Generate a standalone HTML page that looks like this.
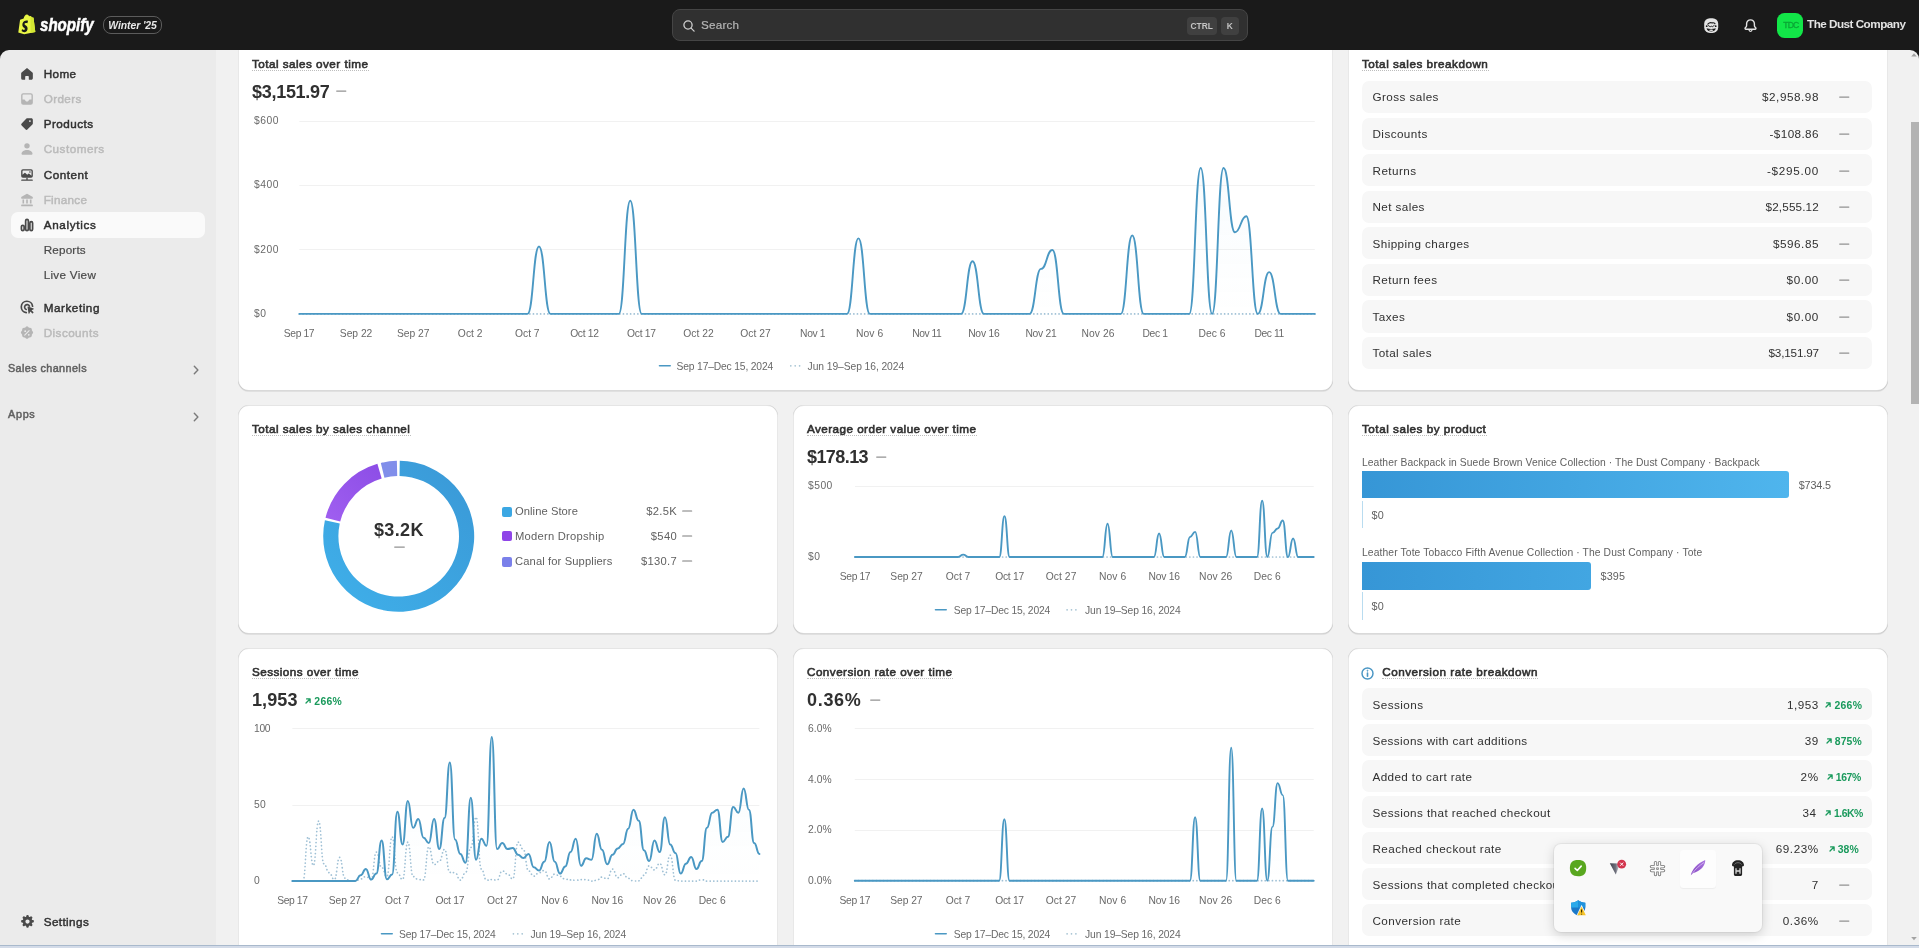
<!DOCTYPE html><html lang="en"><head><meta charset="utf-8"><title>Analytics</title><style>
*{box-sizing:border-box;margin:0;padding:0}
html,body{width:1919px;height:948px;overflow:hidden;background:#1a1a1a;font-family:"Liberation Sans",sans-serif;}
.t{position:absolute;white-space:nowrap;}
.a{position:absolute;}
.card{position:absolute;background:#fff;border-radius:11px;box-shadow:inset 1px 0 0 rgba(0,0,0,.09),inset -1px 0 0 rgba(0,0,0,.09),inset 0 -1px 0 rgba(0,0,0,.15),inset 0 1px 0 rgba(204,204,204,.5),0 1px 0 rgba(26,26,26,.08);}
.row{position:absolute;background:#f7f7f7;border-radius:7px;left:1362px;width:510px;height:32.4px;}
svg{position:absolute;overflow:visible}
.ul{position:absolute;height:0;border-bottom:1px dotted #bdbdbd;}
</style></head><body><div id="root" style="position:absolute;left:0;top:0;width:1919px;height:948px;will-change:transform">
<div class="a" style="left:0;top:50px;width:216px;height:898px;background:#ebebeb;border-top-left-radius:9px"></div>
<div class="a" style="left:216px;top:50px;width:1703px;height:898px;background:#f1f1f1;border-top-right-radius:9px"></div>
<div class="card" style="left:238.0px;top:30.0px;width:1095.0px;height:361.0px;"></div>
<div class="card" style="left:1348.0px;top:30.0px;width:540.0px;height:361.0px;"></div>
<div class="card" style="left:238.0px;top:405.0px;width:540.0px;height:229.0px;"></div>
<div class="card" style="left:793.0px;top:405.0px;width:540.0px;height:229.0px;"></div>
<div class="card" style="left:1348.0px;top:405.0px;width:540.0px;height:229.0px;"></div>
<div class="card" style="left:238.0px;top:648.0px;width:540.0px;height:320.0px;"></div>
<div class="card" style="left:793.0px;top:648.0px;width:540.0px;height:320.0px;"></div>
<div class="card" style="left:1348.0px;top:648.0px;width:540.0px;height:320.0px;"></div>
<div class="a" style="left:216px;top:0;width:1703px;height:50px;background:#1a1a1a"></div>
<div class="a" style="left:11px;top:212.3px;width:193.5px;height:25.4px;background:#fafafa;border-radius:7px"></div>
<svg class="a" style="left:18.00px;top:64.90px;color:#4a4a4a" width="18" height="18" viewBox="0 0 20 20" fill="currentColor"><path d="M9.3 3.75a1.1 1.1 0 0 1 1.4 0l5.35 4.5c.28.24.45.6.45.96v5.54c0 .97-.78 1.75-1.75 1.75h-2a.75.75 0 0 1-.75-.75v-2.75a.75.75 0 0 0-.75-.75h-2.5a.75.75 0 0 0-.75.75v2.75c0 .41-.34.75-.75.75h-2a1.75 1.75 0 0 1-1.75-1.75v-5.54c0-.37.17-.72.45-.96z"/></svg>
<span class="t" style="left:43.70px;top:67px;font-size:11.70px;line-height:13px;height:13px;color:#303030;-webkit-text-stroke:0.45px #303030;letter-spacing:0.398px;">Home</span>
<svg class="a" style="left:18.00px;top:89.60px;color:#b5b5b5" width="18" height="18" viewBox="0 0 20 20" fill="currentColor"><path fill-rule="evenodd" d="M5.75 3.5h8.5a2.25 2.25 0 0 1 2.25 2.25v8.5a2.25 2.25 0 0 1-2.25 2.25h-8.5a2.25 2.25 0 0 1-2.25-2.25v-8.5a2.25 2.25 0 0 1 2.25-2.25zm0 1.5a.75.75 0 0 0-.75.75v4.75h1.9c.5 0 .93.33 1.07.8.27.86 1.07 1.45 2.03 1.45s1.76-.6 2.03-1.45c.14-.47.57-.8 1.07-.8H15v-4.75a.75.75 0 0 0-.75-.75z"/></svg>
<span class="t" style="left:43.70px;top:92px;font-size:11.70px;line-height:13px;height:13px;color:#bababa;-webkit-text-stroke:0.45px #bababa;letter-spacing:0.374px;">Orders</span>
<svg class="a" style="left:18.00px;top:114.80px;color:#4a4a4a" width="18" height="18" viewBox="0 0 20 20" fill="currentColor"><path fill-rule="evenodd" d="M10.6 3.5h4.15c.97 0 1.75.78 1.75 1.75v4.15c0 .46-.18.9-.51 1.24l-5.3 5.3a1.75 1.75 0 0 1-2.48 0l-4.15-4.15a1.75 1.75 0 0 1 0-2.48l5.3-5.3c.33-.33.78-.51 1.24-.51zm2.65 4.25a1 1 0 1 0 0-2 1 1 0 0 0 0 2z"/></svg>
<span class="t" style="left:43.70px;top:117px;font-size:11.70px;line-height:13px;height:13px;color:#303030;-webkit-text-stroke:0.45px #303030;letter-spacing:0.479px;">Products</span>
<svg class="a" style="left:18.00px;top:139.80px;color:#b5b5b5" width="18" height="18" viewBox="0 0 20 20" fill="currentColor"><path d="M10 9.5a3 3 0 1 0 0-6 3 3 0 0 0 0 6z"/><path d="M3.9 15.2c0-2.4 2.7-4.2 6.1-4.2s6.1 1.8 6.1 4.2c0 .75-.6 1.3-1.35 1.3h-9.5c-.75 0-1.35-.55-1.35-1.3z"/></svg>
<span class="t" style="left:43.70px;top:142px;font-size:11.70px;line-height:13px;height:13px;color:#bababa;-webkit-text-stroke:0.45px #bababa;letter-spacing:0.493px;">Customers</span>
<svg class="a" style="left:18.00px;top:165.50px;color:#4a4a4a" width="18" height="18" viewBox="0 0 20 20" fill="currentColor"><path fill-rule="evenodd" d="M5.5 3.5h9a2 2 0 0 1 2 2v5.5a2 2 0 0 1-2 2h-9a2 2 0 0 1-2-2v-5.5a2 2 0 0 1 2-2zm-.5 6.3 2.2-2.1a.7.7 0 0 1 .95 0l2.1 2 1.3-1.2a.7.7 0 0 1 .95 0l2.5 2.4v-5.4a.5.5 0 0 0-.5-.5h-9a.5.5 0 0 0-.5.5zm8.25-2.3a.9.9 0 1 0 0-1.8.9.9 0 0 0 0 1.8z"/><path d="M3.5 15.75a.75.75 0 0 1 .75-.75h11.5a.75.75 0 0 1 0 1.5h-11.5a.75.75 0 0 1-.75-.75z"/><path d="M9.25 13h1.5v2.5h-1.5z"/></svg>
<span class="t" style="left:43.70px;top:168px;font-size:11.70px;line-height:13px;height:13px;color:#303030;-webkit-text-stroke:0.45px #303030;letter-spacing:0.503px;">Content</span>
<svg class="a" style="left:18.00px;top:190.60px;color:#b5b5b5" width="18" height="18" viewBox="0 0 20 20" fill="currentColor"><path d="M9.4 3.2a1.2 1.2 0 0 1 1.2 0l5.4 3.1c.3.17.5.5.5.85v.6a.75.75 0 0 1-.75.75h-11.5a.75.75 0 0 1-.75-.75v-.6c0-.35.2-.68.5-.85z"/><path d="M5 9.5h1.75v4.5h-1.75zM9.1 9.5h1.8v4.5h-1.8zM13.25 9.5h1.75v4.5h-1.75z"/><path d="M3.5 15.75c0-.41.34-.75.75-.75h11.5a.75.75 0 0 1 .75.75v.5a.75.75 0 0 1-.75.75h-11.5a.75.75 0 0 1-.75-.75z"/></svg>
<span class="t" style="left:43.70px;top:193px;font-size:11.70px;line-height:13px;height:13px;color:#bababa;-webkit-text-stroke:0.45px #bababa;letter-spacing:0.268px;">Finance</span>
<svg class="a" style="left:18.00px;top:215.50px;color:#4a4a4a" width="18" height="18" viewBox="0 0 20 20" fill="currentColor"><g fill="none" stroke="currentColor" stroke-width="1.9"><rect x="3.8" y="10.3" width="3" height="6" rx="1.5"/><rect x="8.5" y="3.8" width="3" height="12.5" rx="1.5"/><rect x="13.2" y="6.3" width="3" height="10" rx="1.5"/></g></svg>
<span class="t" style="left:43.70px;top:218px;font-size:11.70px;line-height:13px;height:13px;color:#303030;-webkit-text-stroke:0.45px #303030;letter-spacing:0.665px;">Analytics</span>
<svg class="a" style="left:18.00px;top:298.40px;color:#4a4a4a" width="18" height="18" viewBox="0 0 20 20" fill="currentColor"><g fill="none" stroke="currentColor" stroke-width="1.85" stroke-linecap="round"><path d="M16.2 9.2a6.3 6.3 0 1 0-7 7"/><path d="M12.7 9a2.8 2.8 0 1 0-3.6 3.7"/></g><path d="M10.6 10.1a.5.5 0 0 1 .63-.63l6.1 2.1a.5.5 0 0 1 .05.92l-2.3 1.1 2 2a.6.6 0 0 1 0 .85l-.5.5a.6.6 0 0 1-.85 0l-2-2-1.1 2.3a.5.5 0 0 1-.92-.05z"/></svg>
<span class="t" style="left:43.70px;top:301px;font-size:11.70px;line-height:13px;height:13px;color:#303030;-webkit-text-stroke:0.45px #303030;letter-spacing:0.548px;">Marketing</span>
<svg class="a" style="left:18.00px;top:324.00px;color:#b5b5b5" width="18" height="18" viewBox="0 0 20 20" fill="currentColor"><path fill-rule="evenodd" d="M8.6 3.3a2 2 0 0 1 2.8 0l.5.5c.2.2.5.3.8.3h.7a2 2 0 0 1 2 2v.7c0 .3.1.6.3.8l.5.5a2 2 0 0 1 0 2.8l-.5.5c-.2.2-.3.5-.3.8v.7a2 2 0 0 1-2 2h-.7c-.3 0-.6.1-.8.3l-.5.5a2 2 0 0 1-2.8 0l-.5-.5a1.1 1.1 0 0 0-.8-.3h-.7a2 2 0 0 1-2-2v-.7c0-.3-.1-.6-.3-.8l-.5-.5a2 2 0 0 1 0-2.8l.5-.5c.2-.2.3-.5.3-.8v-.7a2 2 0 0 1 2-2h.7c.3 0 .6-.1.8-.3zm-.6 5.7a1 1 0 1 0 0-2 1 1 0 0 0 0 2zm4 4a1 1 0 1 0 0-2 1 1 0 0 0 0 2zm.8-5.1a.6.6 0 0 0-.85-.85l-4.9 4.9a.6.6 0 0 0 .85.85z"/></svg>
<span class="t" style="left:43.70px;top:326px;font-size:11.70px;line-height:13px;height:13px;color:#bababa;-webkit-text-stroke:0.45px #bababa;letter-spacing:0.437px;">Discounts</span>
<span class="t" style="left:43.70px;top:243px;font-size:11.70px;line-height:13px;height:13px;color:#4a4a4a;-webkit-text-stroke:0.20px #4a4a4a;letter-spacing:0.176px;">Reports</span>
<span class="t" style="left:43.70px;top:268px;font-size:11.70px;line-height:13px;height:13px;color:#4a4a4a;-webkit-text-stroke:0.20px #4a4a4a;letter-spacing:0.293px;">Live View</span>
<span class="t" style="left:8.00px;top:362px;font-size:10.80px;line-height:12px;height:12px;color:#616161;-webkit-text-stroke:0.50px #616161;letter-spacing:0.411px;">Sales channels</span>
<span class="t" style="left:8.00px;top:408px;font-size:10.80px;line-height:12px;height:12px;color:#616161;-webkit-text-stroke:0.50px #616161;letter-spacing:0.721px;">Apps</span>
<svg class="a" style="left:190.6px;top:365.0px" width="10" height="10" viewBox="0 0 10 10" fill="none" stroke="#7a7a7a" stroke-width="1.4" stroke-linecap="round" stroke-linejoin="round"><path d="M3.300 1.200l3.600 3.800-3.600 3.800"/></svg>
<svg class="a" style="left:190.6px;top:411.5px" width="10" height="10" viewBox="0 0 10 10" fill="none" stroke="#7a7a7a" stroke-width="1.4" stroke-linecap="round" stroke-linejoin="round"><path d="M3.300 1.200l3.600 3.800-3.600 3.800"/></svg>
<svg class="a" style="left:18.50px;top:913.10px;color:#4a4a4a" width="17" height="17" viewBox="0 0 20 20" fill="currentColor"><path fill-rule="evenodd" d="M8.6 3.2c.1-.55.58-.95 1.14-.95h.52c.56 0 1.04.4 1.14.95l.2 1.1c.38.13.75.3 1.08.5l.93-.63a1.16 1.16 0 0 1 1.48.14l.37.37c.4.4.45 1.02.14 1.48l-.64.93c.2.34.37.7.5 1.08l1.1.2c.55.1.95.58.95 1.14v.52c0 .56-.4 1.040-.95 1.14l-1.1.2c-.13.38-.3.75-.5 1.08l.64.93c.31.46.26 1.080-.14 1.48l-.37.37c-.4.4-1.020.45-1.480.14l-.93-.64c-.34.2-.7.37-1.080.5l-.2 1.100c-.1.55-.58.950-1.140.950h-.52c-.56 0-1.040-.4-1.140-.95l-.2-1.100a5.500 5.500 0 0 1-1.080-.5l-.93.640c-.46.310-1.080.260-1.480-.140l-.37-.37a1.160 1.160 0 0 1-.140-1.480l.640-.93a5.500 5.500 0 0 1-.5-1.080l-1.100-.2a1.160 1.160 0 0 1-.950-1.140v-.52c0-.56.4-1.040.950-1.140l1.100-.2c.13-.38.3-.75.5-1.080l-.640-.93a1.160 1.160 0 0 1 .140-1.480l.37-.37c.4-.4 1.020-.45 1.480-.14l.93.630c.34-.2.7-.37 1.080-.5zm1.400 9.300a2.500 2.500 0 1 0 0-5 2.500 2.500 0 0 0 0 5z"/></svg>
<span class="t" style="left:43.70px;top:915px;font-size:11.70px;line-height:13px;height:13px;color:#303030;-webkit-text-stroke:0.45px #303030;letter-spacing:0.403px;">Settings</span>
<div class="a" style="left:0;top:0;width:1919px;height:50px;background:#1a1a1a"></div>
<svg class="a" style="left:18.3px;top:14.3px" width="17.8" height="20.3" viewBox="0 0 19 19.5" preserveAspectRatio="none">
<path d="M2.2 5.6 6 4.4C6.5 2.4 7.8.6 9.6.6c.7 0 1.2.3 1.6.8.3-.1.9 0 1.2.7l.9-.2c.2 0 .4.1.5.3l1.300 1.100 1.100.1c.2 0 .3.2.4.4l1.900 13.600-11.900 2.100-6.300-1.800z" fill="#e9f545"/>
<path d="M13.3 1.900l1.800 1.400 1.100.1c.2 0 .3.2.4.4l1.900 13.600-5.000.9z" fill="#d3e632"/>
<path d="M10.6 6.900l-.6 2c-.5-.25-1.100-.4-1.700-.35-1.350.1-1.360.95-1.350 1.150.07 1.150 3.100 1.400 3.270 4.100.13 2.100-1.130 3.600-2.950 3.700-2.200.14-3.400-1.150-3.400-1.150l.47-1.950s1.200.9 2.170.85c.63-.04.86-.55.830-.9-.1-1.500-2.550-1.400-2.700-3.850-.13-2.050 1.220-4.150 4.200-4.330.8-.06 1.400.08 1.760.23z" fill="#1a1a1a"/>
</svg>
<span class="t" style="left:40.10px;top:14px;font-size:18.60px;line-height:21px;height:21px;color:#ffffff;font-weight:700;font-style:italic;-webkit-text-stroke:0.55px #fff;transform-origin:0 50%;transform:scaleX(0.812);">shopify</span>
<div class="a" style="left:102.7px;top:16px;width:59.2px;height:18px;border:1px solid #5c5c5c;border-radius:8px"></div>
<span class="t" style="left:108.30px;top:20px;font-size:10.40px;line-height:11px;height:11px;color:#e8e8e8;font-weight:700;font-style:italic;letter-spacing:-0.069px;">Winter '25</span>
<div class="a" style="left:672px;top:9px;width:575.5px;height:31.7px;background:#303030;border:1px solid #454545;border-radius:8px"></div>
<svg class="a" style="left:681.5px;top:18.5px" width="14" height="14" viewBox="0 0 14 14" fill="none" stroke="#cfcfcf" stroke-width="1.3" stroke-linecap="round"><circle cx="6" cy="6" r="4.1"/><path d="M9.1 9.1l3 3"/></svg>
<span class="t" style="left:701.00px;top:18px;font-size:11.70px;line-height:13px;height:13px;color:#b5b5b5;-webkit-text-stroke:0.20px #b5b5b5;letter-spacing:0.205px;">Search</span>
<div class="a" style="left:1186.5px;top:17px;width:30.5px;height:17.5px;background:#404040;border-radius:4px"></div>
<div class="a" style="left:1221px;top:17px;width:17.5px;height:17.5px;background:#404040;border-radius:4px"></div>
<span class="t" style="left:1190.55px;top:21px;font-size:8.40px;line-height:10px;height:10px;color:#c4c4c4;font-weight:700;letter-spacing:0.026px;">CTRL</span>
<span class="t" style="left:1226.77px;top:21px;font-size:8.40px;line-height:10px;height:10px;color:#c4c4c4;font-weight:700;">K</span>
<svg class="a" style="left:1704px;top:17.6px" width="14.4" height="15.2" viewBox="0 0 14.4 15.2">
<rect x=".2" y=".2" width="14" height="14.8" rx="5.6" fill="#e4e4e4"/>
<path d="M3.800 6.100c1.300-1.400 3-1.800 4.500-1.200 1-.3 2 0 2.700.7" stroke="#1a1a1a" stroke-width="1.100" fill="none" stroke-linecap="round"/>
<circle cx="2.700" cy="8.200" r=".9" fill="#1a1a1a"/><circle cx="11.700" cy="8.200" r=".9" fill="#1a1a1a"/>
<path d="M4.200 7.500l2 1.300 1-.7 1 .7 2-1.300" stroke="#1a1a1a" stroke-width=".9" fill="none" stroke-linejoin="round" stroke-linecap="round"/>
<path d="M2.600 10.300c.5 4.300 8.700 4.300 9.200 0-2.800 1-6.400 1-9.200 0z" fill="#1a1a1a"/><ellipse cx="7.200" cy="12.300" rx="2.100" ry=".75" fill="#e4e4e4"/>
</svg>
<svg class="a" style="left:1742.5px;top:17.5px" width="15" height="15" viewBox="0 0 15 15" fill="none" stroke="#e3e3e3" stroke-width="1.4" stroke-linecap="round" stroke-linejoin="round">
<path d="M7.500 1.900c-2.300 0-3.900 1.700-3.900 3.900v1.600c0 .7-.3 1.400-.8 1.900l-.5.500c-.5.500-.2 1.400.6 1.400h9.200c.8 0 1.100-.9.600-1.400l-.5-.5c-.5-.5-.8-1.200-.8-1.900v-1.600c0-2.200-1.600-3.900-3.900-3.900z"/><path d="M6.200 12.400c.2.600.7 1 1.300 1s1.100-.4 1.300-1"/></svg>
<div class="a" style="left:1777.4px;top:12.5px;width:25.5px;height:25.6px;background:#12e648;border-radius:7.5px"></div>
<span class="t" style="left:1783.30px;top:20px;font-size:8.60px;line-height:10px;height:10px;color:#0aa535;-webkit-text-stroke:0.30px #0aa535;letter-spacing:-0.825px;">TDC</span>
<span class="t" style="left:1807.00px;top:17px;font-size:11.70px;line-height:13px;height:13px;color:#e3e3e3;font-weight:700;letter-spacing:-0.507px;">The Dust Company</span>
<span class="t" style="left:252.00px;top:57px;font-size:11.70px;line-height:13px;height:13px;color:#303030;-webkit-text-stroke:0.60px #303030;letter-spacing:0.469px;">Total sales over time</span>
<div class="ul" style="left:252.0px;top:70px;width:116.5px"></div>
<span class="t" style="left:252.00px;top:82px;font-size:18.00px;line-height:20px;height:20px;color:#303030;font-weight:700;letter-spacing:-0.286px;">$3,151.97</span>
<svg class="a" style="left:336.0px;top:89.3px" width="10.5" height="4" viewBox="0 0 10.5 4"><line x1="0.7" y1="2" x2="9.8" y2="2" stroke="#929292" stroke-width="1.25" stroke-linecap="round"/></svg>
<svg class="a" style="left:0;top:0" width="1919" height="948" viewBox="0 0 1919 948"><defs><linearGradient id="gA" x1="0" y1="0" x2="0" y2="1"><stop offset="0" stop-color="#4aa8da" stop-opacity="0.04"/><stop offset="1" stop-color="#4aa8da" stop-opacity="0"/></linearGradient></defs><line x1="299.4" x2="1314.8" y1="121.5" y2="121.5" stroke="#f1f1f1" stroke-width="1"/><line x1="299.4" x2="1314.8" y1="185.5" y2="185.5" stroke="#f1f1f1" stroke-width="1"/><line x1="299.4" x2="1314.8" y1="249.5" y2="249.5" stroke="#f1f1f1" stroke-width="1"/><path d="M299.40,313.90H310.81H322.22H333.63H345.04H356.44H367.85H379.26H390.67H402.08H413.49H424.90H436.31H447.72H459.13H470.53H481.94H493.35H504.76H516.17H527.58C533.28,313.90,533.28,246.44,538.99,246.44C544.69,246.44,544.69,313.90,550.40,313.90H561.81H573.22H584.62H596.03H607.44H618.85C624.56,313.90,624.56,200.82,630.26,200.82C635.97,200.82,635.97,313.90,641.67,313.90H653.08H664.49H675.90H687.31H698.71H710.12H721.53H732.94H744.35H755.76H767.17H778.58H789.99H801.40H812.80H824.21H835.62H847.03C852.74,313.90,852.74,238.41,858.44,238.41C864.14,238.41,864.14,313.90,869.85,313.90H881.26H892.67H904.08H915.49H926.89H938.30H949.71H961.12C966.83,313.90,966.83,261.21,972.53,261.21C978.23,261.21,978.23,313.90,983.94,313.90H995.35H1006.76H1018.17H1029.58C1035.28,313.90,1035.28,268.92,1040.98,268.92C1046.69,268.92,1046.69,249.97,1052.39,249.97C1058.10,249.97,1058.10,313.90,1063.80,313.90H1075.21H1086.62H1098.03H1109.44H1120.85C1126.55,313.90,1126.55,235.51,1132.26,235.51C1137.96,235.51,1137.96,313.90,1143.67,313.90H1155.07H1166.48H1177.89H1189.30C1195.01,313.90,1195.01,168.05,1200.71,168.05C1206.41,168.05,1206.41,313.90,1212.12,313.90C1217.82,313.90,1217.82,168.05,1223.53,168.05C1229.23,168.05,1229.23,232.30,1234.94,232.30C1240.64,232.30,1240.64,216.24,1246.35,216.24C1252.05,216.24,1252.05,313.90,1257.76,313.90C1263.46,313.90,1263.46,272.14,1269.16,272.14C1274.87,272.14,1274.87,313.90,1280.57,313.90H1291.98H1303.39H1314.80L1314.80,313.90L299.40,313.90Z" fill="url(#gA)"/><path d="M299.40,313.90H310.81H322.22H333.63H345.04H356.44H367.85H379.26H390.67H402.08H413.49H424.90H436.31H447.72H459.13H470.53H481.94H493.35H504.76H516.17H527.58H538.99H550.40H561.81H573.22H584.62H596.03H607.44H618.85H630.26H641.67H653.08H664.49H675.90H687.31H698.71H710.12H721.53H732.94H744.35H755.76H767.17H778.58H789.99H801.40H812.80H824.21H835.62H847.03H858.44H869.85H881.26H892.67H904.08H915.49H926.89H938.30H949.71H961.12H972.53H983.94H995.35H1006.76H1018.17H1029.58H1040.98H1052.39H1063.80H1075.21H1086.62H1098.03H1109.44H1120.85H1132.26H1143.67H1155.07H1166.48H1177.89H1189.30H1200.71H1212.12H1223.53H1234.94H1246.35H1257.76H1269.16H1280.57H1291.98H1303.39H1314.80" fill="none" stroke="#9fc0d5" stroke-width="1.7" stroke-dasharray="0.1 3.5" stroke-linecap="round"/><path d="M299.40,313.90H310.81H322.22H333.63H345.04H356.44H367.85H379.26H390.67H402.08H413.49H424.90H436.31H447.72H459.13H470.53H481.94H493.35H504.76H516.17H527.58C533.28,313.90,533.28,246.44,538.99,246.44C544.69,246.44,544.69,313.90,550.40,313.90H561.81H573.22H584.62H596.03H607.44H618.85C624.56,313.90,624.56,200.82,630.26,200.82C635.97,200.82,635.97,313.90,641.67,313.90H653.08H664.49H675.90H687.31H698.71H710.12H721.53H732.94H744.35H755.76H767.17H778.58H789.99H801.40H812.80H824.21H835.62H847.03C852.74,313.90,852.74,238.41,858.44,238.41C864.14,238.41,864.14,313.90,869.85,313.90H881.26H892.67H904.08H915.49H926.89H938.30H949.71H961.12C966.83,313.90,966.83,261.21,972.53,261.21C978.23,261.21,978.23,313.90,983.94,313.90H995.35H1006.76H1018.17H1029.58C1035.28,313.90,1035.28,268.92,1040.98,268.92C1046.69,268.92,1046.69,249.97,1052.39,249.97C1058.10,249.97,1058.10,313.90,1063.80,313.90H1075.21H1086.62H1098.03H1109.44H1120.85C1126.55,313.90,1126.55,235.51,1132.26,235.51C1137.96,235.51,1137.96,313.90,1143.67,313.90H1155.07H1166.48H1177.89H1189.30C1195.01,313.90,1195.01,168.05,1200.71,168.05C1206.41,168.05,1206.41,313.90,1212.12,313.90C1217.82,313.90,1217.82,168.05,1223.53,168.05C1229.23,168.05,1229.23,232.30,1234.94,232.30C1240.64,232.30,1240.64,216.24,1246.35,216.24C1252.05,216.24,1252.05,313.90,1257.76,313.90C1263.46,313.90,1263.46,272.14,1269.16,272.14C1274.87,272.14,1274.87,313.90,1280.57,313.90H1291.98H1303.39H1314.80" fill="none" stroke="#4a98c3" stroke-width="1.9" stroke-linejoin="round" stroke-linecap="round"/></svg>
<span class="t" style="left:254.00px;top:115px;font-size:10.30px;line-height:11px;height:11px;color:#696969;letter-spacing:0.497px;">$600</span>
<span class="t" style="left:254.00px;top:179px;font-size:10.30px;line-height:11px;height:11px;color:#696969;letter-spacing:0.497px;">$400</span>
<span class="t" style="left:254.00px;top:244px;font-size:10.30px;line-height:11px;height:11px;color:#696969;letter-spacing:0.497px;">$200</span>
<span class="t" style="left:254.00px;top:308px;font-size:10.30px;line-height:11px;height:11px;color:#696969;letter-spacing:0.422px;">$0</span>
<span class="t" style="left:283.80px;top:328px;font-size:10.30px;line-height:11px;height:11px;color:#696969;letter-spacing:-0.374px;">Sep 17</span>
<span class="t" style="left:339.82px;top:328px;font-size:10.30px;line-height:11px;height:11px;color:#696969;letter-spacing:-0.024px;">Sep 22</span>
<span class="t" style="left:396.94px;top:328px;font-size:10.30px;line-height:11px;height:11px;color:#696969;letter-spacing:-0.041px;">Sep 27</span>
<span class="t" style="left:457.86px;top:328px;font-size:10.30px;line-height:11px;height:11px;color:#696969;letter-spacing:0.017px;">Oct 2</span>
<span class="t" style="left:515.03px;top:328px;font-size:10.30px;line-height:11px;height:11px;color:#696969;letter-spacing:-0.023px;">Oct 7</span>
<span class="t" style="left:570.15px;top:328px;font-size:10.30px;line-height:11px;height:11px;color:#696969;letter-spacing:-0.324px;">Oct 12</span>
<span class="t" style="left:627.12px;top:328px;font-size:10.30px;line-height:11px;height:11px;color:#696969;letter-spacing:-0.290px;">Oct 17</span>
<span class="t" style="left:683.14px;top:328px;font-size:10.30px;line-height:11px;height:11px;color:#696969;letter-spacing:0.060px;">Oct 22</span>
<span class="t" style="left:740.26px;top:328px;font-size:10.30px;line-height:11px;height:11px;color:#696969;letter-spacing:0.043px;">Oct 27</span>
<span class="t" style="left:800.08px;top:328px;font-size:10.30px;line-height:11px;height:11px;color:#696969;letter-spacing:-0.361px;">Nov 1</span>
<span class="t" style="left:856.10px;top:328px;font-size:10.30px;line-height:11px;height:11px;color:#696969;letter-spacing:0.059px;">Nov 6</span>
<span class="t" style="left:912.17px;top:328px;font-size:10.30px;line-height:11px;height:11px;color:#696969;letter-spacing:-0.445px;">Nov 11</span>
<span class="t" style="left:968.14px;top:328px;font-size:10.30px;line-height:11px;height:11px;color:#696969;letter-spacing:-0.206px;">Nov 16</span>
<span class="t" style="left:1025.41px;top:328px;font-size:10.30px;line-height:11px;height:11px;color:#696969;letter-spacing:-0.273px;">Nov 21</span>
<span class="t" style="left:1081.38px;top:328px;font-size:10.30px;line-height:11px;height:11px;color:#696969;letter-spacing:0.094px;">Nov 26</span>
<span class="t" style="left:1142.50px;top:328px;font-size:10.30px;line-height:11px;height:11px;color:#696969;letter-spacing:-0.361px;">Dec 1</span>
<span class="t" style="left:1198.62px;top:328px;font-size:10.30px;line-height:11px;height:11px;color:#696969;letter-spacing:0.019px;">Dec 6</span>
<span class="t" style="left:1254.59px;top:328px;font-size:10.30px;line-height:11px;height:11px;color:#696969;letter-spacing:-0.445px;">Dec 11</span>
<svg class="a" style="left:659.0px;top:363.0px" width="160" height="6" viewBox="0 0 160 6"><line x1="0.5" y1="2.7" x2="11.2" y2="2.7" stroke="#4a98c3" stroke-width="1.6" stroke-linecap="round"/><circle cx="131.80" cy="2.8" r="0.85" fill="#a4c2d2"/><circle cx="136.20" cy="2.8" r="0.85" fill="#a4c2d2"/><circle cx="140.60" cy="2.8" r="0.85" fill="#a4c2d2"/></svg>
<span class="t" style="left:676.60px;top:361px;font-size:10.30px;line-height:11px;height:11px;color:#696969;letter-spacing:-0.166px;">Sep 17–Dec 15, 2024</span>
<span class="t" style="left:807.60px;top:361px;font-size:10.30px;line-height:11px;height:11px;color:#696969;letter-spacing:-0.076px;">Jun 19–Sep 16, 2024</span>
<span class="t" style="left:1362.00px;top:57px;font-size:11.70px;line-height:13px;height:13px;color:#303030;-webkit-text-stroke:0.60px #303030;letter-spacing:0.511px;">Total sales breakdown</span>
<div class="ul" style="left:1362.0px;top:70px;width:126.5px"></div>
<div class="row" style="top:80.9px"></div>
<span class="t" style="left:1372.50px;top:90px;font-size:11.70px;line-height:13px;height:13px;color:#303030;letter-spacing:0.421px;">Gross sales</span>
<span class="t" style="left:1762.00px;top:90px;font-size:11.70px;line-height:13px;height:13px;color:#303030;letter-spacing:0.550px;">$2,958.98</span>
<svg class="a" style="left:1838.8px;top:94.9px" width="10.5" height="4" viewBox="0 0 10.5 4"><line x1="0.7" y1="2" x2="9.8" y2="2" stroke="#929292" stroke-width="1.25" stroke-linecap="round"/></svg>
<div class="row" style="top:117.5px"></div>
<span class="t" style="left:1372.50px;top:127px;font-size:11.70px;line-height:13px;height:13px;color:#303030;letter-spacing:0.428px;">Discounts</span>
<span class="t" style="left:1769.50px;top:127px;font-size:11.70px;line-height:13px;height:13px;color:#303030;letter-spacing:0.414px;">-$108.86</span>
<svg class="a" style="left:1838.8px;top:131.9px" width="10.5" height="4" viewBox="0 0 10.5 4"><line x1="0.7" y1="2" x2="9.8" y2="2" stroke="#929292" stroke-width="1.25" stroke-linecap="round"/></svg>
<div class="row" style="top:154.0px"></div>
<span class="t" style="left:1372.50px;top:164px;font-size:11.70px;line-height:13px;height:13px;color:#303030;letter-spacing:0.439px;">Returns</span>
<span class="t" style="left:1767.00px;top:164px;font-size:11.70px;line-height:13px;height:13px;color:#303030;letter-spacing:0.726px;">-$295.00</span>
<svg class="a" style="left:1838.8px;top:168.9px" width="10.5" height="4" viewBox="0 0 10.5 4"><line x1="0.7" y1="2" x2="9.8" y2="2" stroke="#929292" stroke-width="1.25" stroke-linecap="round"/></svg>
<div class="row" style="top:190.6px"></div>
<span class="t" style="left:1372.50px;top:200px;font-size:11.70px;line-height:13px;height:13px;color:#303030;letter-spacing:0.406px;">Net sales</span>
<span class="t" style="left:1765.50px;top:200px;font-size:11.70px;line-height:13px;height:13px;color:#303030;letter-spacing:0.161px;">$2,555.12</span>
<svg class="a" style="left:1838.8px;top:204.9px" width="10.5" height="4" viewBox="0 0 10.5 4"><line x1="0.7" y1="2" x2="9.8" y2="2" stroke="#929292" stroke-width="1.25" stroke-linecap="round"/></svg>
<div class="row" style="top:227.1px"></div>
<span class="t" style="left:1372.50px;top:237px;font-size:11.70px;line-height:13px;height:13px;color:#303030;letter-spacing:0.424px;">Shipping charges</span>
<span class="t" style="left:1773.00px;top:237px;font-size:11.70px;line-height:13px;height:13px;color:#303030;letter-spacing:0.530px;">$596.85</span>
<svg class="a" style="left:1838.8px;top:241.9px" width="10.5" height="4" viewBox="0 0 10.5 4"><line x1="0.7" y1="2" x2="9.8" y2="2" stroke="#929292" stroke-width="1.25" stroke-linecap="round"/></svg>
<div class="row" style="top:263.6px"></div>
<span class="t" style="left:1372.50px;top:273px;font-size:11.70px;line-height:13px;height:13px;color:#303030;letter-spacing:0.412px;">Return fees</span>
<span class="t" style="left:1786.50px;top:273px;font-size:11.70px;line-height:13px;height:13px;color:#303030;letter-spacing:0.644px;">$0.00</span>
<svg class="a" style="left:1838.8px;top:277.9px" width="10.5" height="4" viewBox="0 0 10.5 4"><line x1="0.7" y1="2" x2="9.8" y2="2" stroke="#929292" stroke-width="1.25" stroke-linecap="round"/></svg>
<div class="row" style="top:300.2px"></div>
<span class="t" style="left:1372.50px;top:310px;font-size:11.70px;line-height:13px;height:13px;color:#303030;letter-spacing:0.458px;">Taxes</span>
<span class="t" style="left:1786.50px;top:310px;font-size:11.70px;line-height:13px;height:13px;color:#303030;letter-spacing:0.644px;">$0.00</span>
<svg class="a" style="left:1838.8px;top:314.9px" width="10.5" height="4" viewBox="0 0 10.5 4"><line x1="0.7" y1="2" x2="9.8" y2="2" stroke="#929292" stroke-width="1.25" stroke-linecap="round"/></svg>
<div class="row" style="top:336.8px"></div>
<span class="t" style="left:1372.50px;top:346px;font-size:11.70px;line-height:13px;height:13px;color:#303030;letter-spacing:0.377px;">Total sales</span>
<span class="t" style="left:1768.50px;top:346px;font-size:11.70px;line-height:13px;height:13px;color:#303030;letter-spacing:-0.172px;">$3,151.97</span>
<svg class="a" style="left:1838.8px;top:350.9px" width="10.5" height="4" viewBox="0 0 10.5 4"><line x1="0.7" y1="2" x2="9.8" y2="2" stroke="#929292" stroke-width="1.25" stroke-linecap="round"/></svg>
<span class="t" style="left:252.00px;top:422px;font-size:11.70px;line-height:13px;height:13px;color:#303030;-webkit-text-stroke:0.60px #303030;letter-spacing:0.458px;">Total sales by sales channel</span>
<div class="ul" style="left:252.0px;top:435px;width:158.5px"></div>
<svg class="a" style="left:0;top:0" width="1919" height="948" viewBox="0 0 1919 948"><defs><linearGradient id="dB" x1="0" y1="1" x2="1" y2="0"><stop offset="0" stop-color="#3fb0ea"/><stop offset="1" stop-color="#3a98d6"/></linearGradient><linearGradient id="dP" x1="0" y1="1" x2="1" y2="0"><stop offset="0" stop-color="#a05ff0"/><stop offset="1" stop-color="#8c4de6"/></linearGradient></defs><path d="M399.75,460.81A75.50,75.50,0,1,1,324.91,520.34L339.76,523.56A60.30,60.30,0,1,0,399.54,476.01Z" fill="url(#dB)"/><path d="M325.51,517.78A75.50,75.50,0,0,1,377.38,463.87L381.67,478.45A60.30,60.30,0,0,0,340.24,521.51Z" fill="url(#dP)"/><path d="M380.82,462.95A75.50,75.50,0,0,1,396.86,460.82L397.23,476.02A60.30,60.30,0,0,0,384.42,477.72Z" fill="#808eea"/></svg>
<span class="t" style="left:373.90px;top:520px;font-size:18.00px;line-height:20px;height:20px;color:#303030;font-weight:700;letter-spacing:0.394px;">$3.2K</span>
<svg class="a" style="left:393.8px;top:544.7px" width="11.0" height="4" viewBox="0 0 11.0 4"><line x1="0.7" y1="2" x2="10.3" y2="2" stroke="#929292" stroke-width="1.25" stroke-linecap="round"/></svg>
<div class="a" style="left:502px;top:506.5px;width:10px;height:10px;background:#3ba7e3;border-radius:2px"></div>
<span class="t" style="left:515.00px;top:505px;font-size:11.20px;line-height:12px;height:12px;color:#616161;letter-spacing:0.062px;">Online Store</span>
<span class="t" style="left:646.27px;top:505px;font-size:11.20px;line-height:12px;height:12px;color:#616161;letter-spacing:0.293px;">$2.5K</span>
<svg class="a" style="left:681.7px;top:509.1px" width="10.3" height="4" viewBox="0 0 10.3 4"><line x1="0.7" y1="2" x2="9.6" y2="2" stroke="#7d7d7d" stroke-width="1.25" stroke-linecap="round"/></svg>
<div class="a" style="left:502px;top:531.3px;width:10px;height:10px;background:#8f45e8;border-radius:2px"></div>
<span class="t" style="left:515.00px;top:530px;font-size:11.20px;line-height:12px;height:12px;color:#616161;letter-spacing:0.239px;">Modern Dropship</span>
<span class="t" style="left:650.84px;top:530px;font-size:11.20px;line-height:12px;height:12px;color:#616161;letter-spacing:0.311px;">$540</span>
<svg class="a" style="left:681.7px;top:533.9px" width="10.3" height="4" viewBox="0 0 10.3 4"><line x1="0.7" y1="2" x2="9.6" y2="2" stroke="#7d7d7d" stroke-width="1.25" stroke-linecap="round"/></svg>
<div class="a" style="left:502px;top:556.6px;width:10px;height:10px;background:#7a80ea;border-radius:2px"></div>
<span class="t" style="left:515.00px;top:555px;font-size:11.20px;line-height:12px;height:12px;color:#616161;letter-spacing:0.118px;">Canal for Suppliers</span>
<span class="t" style="left:641.03px;top:555px;font-size:11.20px;line-height:12px;height:12px;color:#616161;letter-spacing:0.285px;">$130.7</span>
<svg class="a" style="left:681.7px;top:559.2px" width="10.3" height="4" viewBox="0 0 10.3 4"><line x1="0.7" y1="2" x2="9.6" y2="2" stroke="#7d7d7d" stroke-width="1.25" stroke-linecap="round"/></svg>
<span class="t" style="left:807.00px;top:422px;font-size:11.70px;line-height:13px;height:13px;color:#303030;-webkit-text-stroke:0.60px #303030;letter-spacing:0.448px;">Average order value over time</span>
<div class="ul" style="left:807.0px;top:435px;width:169.5px"></div>
<span class="t" style="left:807.00px;top:447px;font-size:18.00px;line-height:20px;height:20px;color:#303030;font-weight:700;letter-spacing:-0.581px;">$178.13</span>
<svg class="a" style="left:876.0px;top:454.5px" width="10.5" height="4" viewBox="0 0 10.5 4"><line x1="0.7" y1="2" x2="9.8" y2="2" stroke="#929292" stroke-width="1.25" stroke-linecap="round"/></svg>
<svg class="a" style="left:0;top:0" width="1919" height="948" viewBox="0 0 1919 948"><defs><linearGradient id="gD" x1="0" y1="0" x2="0" y2="1"><stop offset="0" stop-color="#4aa8da" stop-opacity="0.04"/><stop offset="1" stop-color="#4aa8da" stop-opacity="0"/></linearGradient></defs><line x1="855.0" x2="1313.7" y1="486.5" y2="486.5" stroke="#f1f1f1" stroke-width="1"/><path d="M855.00,557.00H860.15H865.31H870.46H875.62H880.77H885.92H891.08H896.23H901.39H906.54H911.69H916.85H922.00H927.16H932.31H937.46H942.62H947.77H952.92H958.08C960.66,557.00,960.66,554.59,963.23,554.59C965.81,554.59,965.81,557.00,968.39,557.00H973.54H978.69H983.85H989.00H994.16H999.31C1001.89,557.00,1001.89,516.10,1004.46,516.10C1007.04,516.10,1007.04,557.00,1009.62,557.00H1014.77H1019.93H1025.08H1030.23H1035.39H1040.54H1045.70H1050.85H1056.00H1061.16H1066.31H1071.47H1076.62H1081.77H1086.93H1092.08H1097.23H1102.39C1104.97,557.00,1104.97,523.77,1107.54,523.77C1110.12,523.77,1110.12,557.00,1112.70,557.00H1117.85H1123.00H1128.16H1133.31H1138.47H1143.62H1148.77H1153.93C1156.51,557.00,1156.51,533.57,1159.08,533.57C1161.66,533.57,1161.66,557.00,1164.24,557.00H1169.39H1174.54H1179.70H1184.85C1187.43,557.00,1187.43,536.98,1190.01,536.98C1192.58,536.98,1192.58,531.87,1195.16,531.87C1197.74,531.87,1197.74,557.00,1200.31,557.00H1205.47H1210.62H1215.78H1220.93H1226.08C1228.66,557.00,1228.66,530.45,1231.24,530.45C1233.81,530.45,1233.81,557.00,1236.39,557.00H1241.54H1246.70H1251.85H1257.01C1259.58,557.00,1259.58,500.77,1262.16,500.77C1264.74,500.77,1264.74,557.00,1267.31,557.00C1269.89,557.00,1269.89,532.86,1272.47,532.86C1275.05,532.86,1275.05,528.46,1277.62,528.46C1280.20,528.46,1280.20,520.51,1282.78,520.51C1285.35,520.51,1285.35,557.00,1287.93,557.00C1290.51,557.00,1290.51,538.54,1293.08,538.54C1295.66,538.54,1295.66,557.00,1298.24,557.00H1303.39H1308.55H1313.70L1313.70,557.00L855.00,557.00Z" fill="url(#gD)"/><path d="M855.00,557.00H860.15H865.31H870.46H875.62H880.77H885.92H891.08H896.23H901.39H906.54H911.69H916.85H922.00H927.16H932.31H937.46H942.62H947.77H952.92H958.08H963.23H968.39H973.54H978.69H983.85H989.00H994.16H999.31H1004.46H1009.62H1014.77H1019.93H1025.08H1030.23H1035.39H1040.54H1045.70H1050.85H1056.00H1061.16H1066.31H1071.47H1076.62H1081.77H1086.93H1092.08H1097.23H1102.39H1107.54H1112.70H1117.85H1123.00H1128.16H1133.31H1138.47H1143.62H1148.77H1153.93H1159.08H1164.24H1169.39H1174.54H1179.70H1184.85H1190.01H1195.16H1200.31H1205.47H1210.62H1215.78H1220.93H1226.08H1231.24H1236.39H1241.54H1246.70H1251.85H1257.01H1262.16H1267.31H1272.47H1277.62H1282.78H1287.93H1293.08H1298.24H1303.39H1308.55H1313.70" fill="none" stroke="#9fc0d5" stroke-width="1.7" stroke-dasharray="0.1 3.5" stroke-linecap="round"/><path d="M855.00,557.00H860.15H865.31H870.46H875.62H880.77H885.92H891.08H896.23H901.39H906.54H911.69H916.85H922.00H927.16H932.31H937.46H942.62H947.77H952.92H958.08C960.66,557.00,960.66,554.59,963.23,554.59C965.81,554.59,965.81,557.00,968.39,557.00H973.54H978.69H983.85H989.00H994.16H999.31C1001.89,557.00,1001.89,516.10,1004.46,516.10C1007.04,516.10,1007.04,557.00,1009.62,557.00H1014.77H1019.93H1025.08H1030.23H1035.39H1040.54H1045.70H1050.85H1056.00H1061.16H1066.31H1071.47H1076.62H1081.77H1086.93H1092.08H1097.23H1102.39C1104.97,557.00,1104.97,523.77,1107.54,523.77C1110.12,523.77,1110.12,557.00,1112.70,557.00H1117.85H1123.00H1128.16H1133.31H1138.47H1143.62H1148.77H1153.93C1156.51,557.00,1156.51,533.57,1159.08,533.57C1161.66,533.57,1161.66,557.00,1164.24,557.00H1169.39H1174.54H1179.70H1184.85C1187.43,557.00,1187.43,536.98,1190.01,536.98C1192.58,536.98,1192.58,531.87,1195.16,531.87C1197.74,531.87,1197.74,557.00,1200.31,557.00H1205.47H1210.62H1215.78H1220.93H1226.08C1228.66,557.00,1228.66,530.45,1231.24,530.45C1233.81,530.45,1233.81,557.00,1236.39,557.00H1241.54H1246.70H1251.85H1257.01C1259.58,557.00,1259.58,500.77,1262.16,500.77C1264.74,500.77,1264.74,557.00,1267.31,557.00C1269.89,557.00,1269.89,532.86,1272.47,532.86C1275.05,532.86,1275.05,528.46,1277.62,528.46C1280.20,528.46,1280.20,520.51,1282.78,520.51C1285.35,520.51,1285.35,557.00,1287.93,557.00C1290.51,557.00,1290.51,538.54,1293.08,538.54C1295.66,538.54,1295.66,557.00,1298.24,557.00H1303.39H1308.55H1313.70" fill="none" stroke="#4a98c3" stroke-width="1.9" stroke-linejoin="round" stroke-linecap="round"/></svg>
<span class="t" style="left:808.00px;top:480px;font-size:10.30px;line-height:11px;height:11px;color:#696969;letter-spacing:0.472px;">$500</span>
<span class="t" style="left:808.00px;top:551px;font-size:10.30px;line-height:11px;height:11px;color:#696969;letter-spacing:0.422px;">$0</span>
<span class="t" style="left:839.80px;top:571px;font-size:10.30px;line-height:11px;height:11px;color:#696969;letter-spacing:-0.374px;">Sep 17</span>
<span class="t" style="left:890.33px;top:571px;font-size:10.30px;line-height:11px;height:11px;color:#696969;letter-spacing:-0.041px;">Sep 27</span>
<span class="t" style="left:945.81px;top:571px;font-size:10.30px;line-height:11px;height:11px;color:#696969;letter-spacing:-0.023px;">Oct 7</span>
<span class="t" style="left:995.29px;top:571px;font-size:10.30px;line-height:11px;height:11px;color:#696969;letter-spacing:-0.290px;">Oct 17</span>
<span class="t" style="left:1045.82px;top:571px;font-size:10.30px;line-height:11px;height:11px;color:#696969;letter-spacing:0.043px;">Oct 27</span>
<span class="t" style="left:1099.05px;top:571px;font-size:10.30px;line-height:11px;height:11px;color:#696969;letter-spacing:0.059px;">Nov 6</span>
<span class="t" style="left:1148.48px;top:571px;font-size:10.30px;line-height:11px;height:11px;color:#696969;letter-spacing:-0.206px;">Nov 16</span>
<span class="t" style="left:1199.11px;top:571px;font-size:10.30px;line-height:11px;height:11px;color:#696969;letter-spacing:0.094px;">Nov 26</span>
<span class="t" style="left:1253.74px;top:571px;font-size:10.30px;line-height:11px;height:11px;color:#696969;letter-spacing:0.019px;">Dec 6</span>
<svg class="a" style="left:935.3px;top:607.0px" width="160" height="6" viewBox="0 0 160 6"><line x1="0.5" y1="2.7" x2="11.2" y2="2.7" stroke="#4a98c3" stroke-width="1.6" stroke-linecap="round"/><circle cx="132.10" cy="2.8" r="0.85" fill="#a4c2d2"/><circle cx="136.50" cy="2.8" r="0.85" fill="#a4c2d2"/><circle cx="140.90" cy="2.8" r="0.85" fill="#a4c2d2"/></svg>
<span class="t" style="left:953.80px;top:605px;font-size:10.30px;line-height:11px;height:11px;color:#696969;letter-spacing:-0.176px;">Sep 17–Dec 15, 2024</span>
<span class="t" style="left:1085.10px;top:605px;font-size:10.30px;line-height:11px;height:11px;color:#696969;letter-spacing:-0.128px;">Jun 19–Sep 16, 2024</span>
<span class="t" style="left:1362.00px;top:422px;font-size:11.70px;line-height:13px;height:13px;color:#303030;-webkit-text-stroke:0.60px #303030;letter-spacing:0.515px;">Total sales by product</span>
<div class="ul" style="left:1362.0px;top:435px;width:124.5px"></div>
<span class="t" style="left:1362.00px;top:457px;font-size:10.30px;line-height:11px;height:11px;color:#616161;letter-spacing:0.083px;">Leather Backpack in Suede Brown Venice Collection · The Dust Company · Backpack</span>
<span class="t" style="left:1362.00px;top:547px;font-size:10.30px;line-height:11px;height:11px;color:#616161;letter-spacing:0.117px;">Leather Tote Tobacco Fifth Avenue Collection · The Dust Company · Tote</span>
<div class="a" style="left:1362px;top:470.9px;width:426.8px;height:27.6px;background:linear-gradient(90deg,#3696d6,#4fb5ed);border-radius:0 3px 3px 0"></div>
<div class="a" style="left:1362px;top:562px;width:229.2px;height:27.6px;background:linear-gradient(90deg,#3696d6,#42a6e2);border-radius:0 3px 3px 0"></div>
<span class="t" style="left:1798.70px;top:479px;font-size:10.80px;line-height:12px;height:12px;color:#616161;letter-spacing:-0.139px;">$734.5</span>
<span class="t" style="left:1600.60px;top:570px;font-size:10.80px;line-height:12px;height:12px;color:#616161;letter-spacing:0.119px;">$395</span>
<div class="a" style="left:1361.6px;top:500.7px;width:1px;height:27.7px;background:#b9dcf0"></div>
<div class="a" style="left:1361.6px;top:592.0px;width:1px;height:27.7px;background:#b9dcf0"></div>
<span class="t" style="left:1371.50px;top:509px;font-size:10.80px;line-height:12px;height:12px;color:#616161;letter-spacing:0.244px;">$0</span>
<span class="t" style="left:1371.50px;top:600px;font-size:10.80px;line-height:12px;height:12px;color:#616161;letter-spacing:0.244px;">$0</span>
<span class="t" style="left:252.00px;top:665px;font-size:11.70px;line-height:13px;height:13px;color:#303030;-webkit-text-stroke:0.60px #303030;letter-spacing:0.453px;">Sessions over time</span>
<div class="ul" style="left:252.0px;top:678px;width:107.0px"></div>
<span class="t" style="left:252.00px;top:690px;font-size:18.00px;line-height:20px;height:20px;color:#303030;font-weight:700;letter-spacing:0.091px;">1,953</span>
<svg class="a" style="left:305.2px;top:698.2px" width="6" height="6" viewBox="0 0 6 6" fill="none" stroke="#1a9a5c" stroke-width="1.3" stroke-linecap="round" stroke-linejoin="round"><path d="M1 5l4-4M1.600.9h3.500v3.500"/></svg>
<span class="t" style="left:314.30px;top:696px;font-size:10.40px;line-height:11px;height:11px;color:#1a9a5c;font-weight:700;letter-spacing:0.300px;">266%</span>
<svg class="a" style="left:0;top:0" width="1919" height="948" viewBox="0 0 1919 948"><defs><linearGradient id="gS" x1="0" y1="0" x2="0" y2="1"><stop offset="0" stop-color="#4aa8da" stop-opacity="0.04"/><stop offset="1" stop-color="#4aa8da" stop-opacity="0"/></linearGradient></defs><line x1="292.4" x2="759.4" y1="728.5" y2="728.5" stroke="#f1f1f1" stroke-width="1"/><line x1="292.4" x2="759.4" y1="805.5" y2="805.5" stroke="#f1f1f1" stroke-width="1"/><path d="M292.40,881.10H297.65H302.89H308.14H313.39H318.64H323.88H329.13H334.38H339.62H344.87H350.12H355.37C357.99,881.10,357.99,875.30,360.61,875.30C363.24,875.30,363.24,869.04,365.86,869.04C368.48,869.04,368.48,879.57,371.11,879.57C373.73,879.57,373.73,873.62,376.36,873.62C378.98,873.62,378.98,840.51,381.60,840.51C384.23,840.51,384.23,879.27,386.85,879.27C389.47,879.27,389.47,874.54,392.10,874.54C394.72,874.54,394.72,811.82,397.34,811.82C399.97,811.82,399.97,844.48,402.59,844.48C405.21,844.48,405.21,800.99,407.84,800.99C410.46,800.99,410.46,827.84,413.09,827.84C415.71,827.84,415.71,818.99,418.33,818.99C420.96,818.99,420.96,837.76,423.58,837.76C426.20,837.76,426.20,843.10,428.83,843.10C431.45,843.10,431.45,818.99,434.07,818.99C436.70,818.99,436.70,849.05,439.32,849.05C441.94,849.05,441.94,818.08,444.57,818.08C447.19,818.08,447.19,762.53,449.82,762.53C452.44,762.53,452.44,839.59,455.06,839.59C457.69,839.59,457.69,853.94,460.31,853.94C462.93,853.94,462.93,862.79,465.56,862.79C468.18,862.79,468.18,797.78,470.80,797.78C473.43,797.78,473.43,859.74,476.05,859.74C478.68,859.74,478.68,838.68,481.30,838.68C483.92,838.68,483.92,845.85,486.55,845.85C489.17,845.85,489.17,736.89,491.79,736.89C494.42,736.89,494.42,849.05,497.04,849.05C499.66,849.05,499.66,843.10,502.29,843.10C504.91,843.10,504.91,849.05,507.53,849.05C510.16,849.05,510.16,847.99,512.78,847.99C515.41,847.99,515.41,854.70,518.03,854.70C520.65,854.70,520.65,858.06,523.28,858.06C525.90,858.06,525.90,853.94,528.52,853.94C531.15,853.94,531.15,867.37,533.77,867.37C536.39,867.37,536.39,870.57,539.02,870.57C541.64,870.57,541.64,861.87,544.27,861.87C546.89,861.87,546.89,841.88,549.51,841.88C552.14,841.88,552.14,861.87,554.76,861.87C557.38,861.87,557.38,873.62,560.01,873.62C562.63,873.62,562.63,866.45,565.25,866.45C567.88,866.45,567.88,852.11,570.50,852.11C573.12,852.11,573.12,838.68,575.75,838.68C578.37,838.68,578.37,865.84,581.00,865.84C583.62,865.84,583.62,858.36,586.24,858.36C588.87,858.36,588.87,859.74,591.49,859.74C594.11,859.74,594.11,833.79,596.74,833.79C599.36,833.79,599.36,849.82,601.98,849.82C604.61,849.82,604.61,864.31,607.23,864.31C609.86,864.31,609.86,854.70,612.48,854.70C615.10,854.70,615.10,848.44,617.73,848.44C620.35,848.44,620.35,844.02,622.97,844.02C625.60,844.02,625.60,828.76,628.22,828.76C630.84,828.76,630.84,809.68,633.47,809.68C636.09,809.68,636.09,820.67,638.71,820.67C641.34,820.67,641.34,850.27,643.96,850.27C646.59,850.27,646.59,861.11,649.21,861.11C651.83,861.11,651.83,840.51,654.46,840.51C657.08,840.51,657.08,852.11,659.70,852.11C662.33,852.11,662.33,817.16,664.95,817.16C667.57,817.16,667.57,844.48,670.20,844.48C672.82,844.48,672.82,853.02,675.44,853.02C678.07,853.02,678.07,873.62,680.69,873.62C683.32,873.62,683.32,863.70,685.94,863.70C688.56,863.70,688.56,856.99,691.19,856.99C693.81,856.99,693.81,869.04,696.43,869.04C699.06,869.04,699.06,861.11,701.68,861.11C704.30,861.11,704.30,827.84,706.93,827.84C709.55,827.84,709.55,812.74,712.18,812.74C714.80,812.74,714.80,809.68,717.42,809.68C720.05,809.68,720.05,841.88,722.67,841.88C725.29,841.88,725.29,836.85,727.92,836.85C730.54,836.85,730.54,806.94,733.16,806.94C735.79,806.94,735.79,812.74,738.41,812.74C741.03,812.74,741.03,788.47,743.66,788.47C746.28,788.47,746.28,809.68,748.91,809.68C751.53,809.68,751.53,843.10,754.15,843.10C756.78,843.10,756.78,853.94,759.40,853.94L759.40,881.10L292.40,881.10Z" fill="url(#gS)"/><path d="M292.40,881.10H297.65H302.89C305.52,881.10,305.52,836.85,308.14,836.85C310.77,836.85,310.77,865.53,313.39,865.53C316.01,865.53,316.01,821.13,318.64,821.13C321.26,821.13,321.26,863.70,323.88,863.70C326.51,863.70,326.51,872.71,329.13,872.71C331.75,872.71,331.75,879.57,334.38,879.57C337.00,879.57,337.00,857.45,339.62,857.45C342.25,857.45,342.25,878.05,344.87,878.05C347.50,878.05,347.50,881.10,350.12,881.10H355.37C357.99,881.10,357.99,878.96,360.61,878.96C363.24,878.96,363.24,876.52,365.86,876.52C368.48,876.52,368.48,879.57,371.11,879.57C373.73,879.57,373.73,852.11,376.36,852.11C378.98,852.11,378.98,867.37,381.60,867.37C384.23,867.37,384.23,876.52,386.85,876.52C389.47,876.52,389.47,836.85,392.10,836.85C394.72,836.85,394.72,872.71,397.34,872.71C399.97,872.71,399.97,879.57,402.59,879.57C405.21,879.57,405.21,842.19,407.84,842.19C410.46,842.19,410.46,876.52,413.09,876.52C415.71,876.52,415.71,879.57,418.33,879.57C420.96,879.57,420.96,879.88,423.58,879.88C426.20,879.88,426.20,846.76,428.83,846.76C431.45,846.76,431.45,864.62,434.07,864.62C436.70,864.62,436.70,861.26,439.32,861.26C441.94,861.26,441.94,849.36,444.57,849.36C447.19,849.36,447.19,872.40,449.82,872.40C452.44,872.40,452.44,872.71,455.06,872.71C457.69,872.71,457.69,880.18,460.31,880.18C462.93,880.18,462.93,872.71,465.56,872.71C468.18,872.71,468.18,847.53,470.80,847.53C473.43,847.53,473.43,817.16,476.05,817.16C478.68,817.16,478.68,869.04,481.30,869.04C483.92,869.04,483.92,880.18,486.55,880.18C489.17,880.18,489.17,879.57,491.79,879.57C494.42,879.57,494.42,880.18,497.04,880.18C499.66,880.18,499.66,870.88,502.29,870.88C504.91,870.88,504.91,874.08,507.53,874.08C510.16,874.08,510.16,878.96,512.78,878.96C515.41,878.96,515.41,842.19,518.03,842.19C520.65,842.19,520.65,849.36,523.28,849.36C525.90,849.36,525.90,870.88,528.52,870.88C531.15,870.88,531.15,876.22,533.77,876.22C536.39,876.22,536.39,872.71,539.02,872.71C541.64,872.71,541.64,870.42,544.27,870.42C546.89,870.42,546.89,878.96,549.51,878.96C552.14,878.96,552.14,874.08,554.76,874.08C557.38,874.08,557.38,876.22,560.01,876.22C562.63,876.22,562.63,879.27,565.25,879.27C567.88,879.27,567.88,879.88,570.50,879.88C573.12,879.88,573.12,880.34,575.75,880.34C578.37,880.34,578.37,879.57,581.00,879.57H586.24C588.87,879.57,588.87,881.10,591.49,881.10C594.11,881.10,594.11,880.34,596.74,880.34C599.36,880.34,599.36,877.13,601.98,877.13C604.61,877.13,604.61,878.96,607.23,878.96C609.86,878.96,609.86,869.04,612.48,869.04C615.10,869.04,615.10,877.74,617.73,877.74C620.35,877.74,620.35,873.62,622.97,873.62C625.60,873.62,625.60,878.35,628.22,878.35C630.84,878.35,630.84,881.10,633.47,881.10C636.09,881.10,636.09,880.79,638.71,880.79C641.34,880.79,641.34,875.30,643.96,875.30C646.59,875.30,646.59,865.84,649.21,865.84C651.83,865.84,651.83,869.96,654.46,869.96C657.08,869.96,657.08,863.40,659.70,863.40C662.33,863.40,662.33,874.84,664.95,874.84C667.57,874.84,667.57,855.16,670.20,855.16C672.82,855.16,672.82,880.34,675.44,880.34C678.07,880.34,678.07,881.10,680.69,881.10H685.94H691.19H696.43C699.06,881.10,699.06,879.57,701.68,879.57C704.30,879.57,704.30,881.10,706.93,881.10H712.18H717.42H722.67H727.92H733.16H738.41H743.66H748.91H754.15H759.40" fill="none" stroke="#9fc0d5" stroke-width="1.7" stroke-dasharray="0.1 3.5" stroke-linecap="round"/><path d="M292.40,881.10H297.65H302.89H308.14H313.39H318.64H323.88H329.13H334.38H339.62H344.87H350.12H355.37C357.99,881.10,357.99,875.30,360.61,875.30C363.24,875.30,363.24,869.04,365.86,869.04C368.48,869.04,368.48,879.57,371.11,879.57C373.73,879.57,373.73,873.62,376.36,873.62C378.98,873.62,378.98,840.51,381.60,840.51C384.23,840.51,384.23,879.27,386.85,879.27C389.47,879.27,389.47,874.54,392.10,874.54C394.72,874.54,394.72,811.82,397.34,811.82C399.97,811.82,399.97,844.48,402.59,844.48C405.21,844.48,405.21,800.99,407.84,800.99C410.46,800.99,410.46,827.84,413.09,827.84C415.71,827.84,415.71,818.99,418.33,818.99C420.96,818.99,420.96,837.76,423.58,837.76C426.20,837.76,426.20,843.10,428.83,843.10C431.45,843.10,431.45,818.99,434.07,818.99C436.70,818.99,436.70,849.05,439.32,849.05C441.94,849.05,441.94,818.08,444.57,818.08C447.19,818.08,447.19,762.53,449.82,762.53C452.44,762.53,452.44,839.59,455.06,839.59C457.69,839.59,457.69,853.94,460.31,853.94C462.93,853.94,462.93,862.79,465.56,862.79C468.18,862.79,468.18,797.78,470.80,797.78C473.43,797.78,473.43,859.74,476.05,859.74C478.68,859.74,478.68,838.68,481.30,838.68C483.92,838.68,483.92,845.85,486.55,845.85C489.17,845.85,489.17,736.89,491.79,736.89C494.42,736.89,494.42,849.05,497.04,849.05C499.66,849.05,499.66,843.10,502.29,843.10C504.91,843.10,504.91,849.05,507.53,849.05C510.16,849.05,510.16,847.99,512.78,847.99C515.41,847.99,515.41,854.70,518.03,854.70C520.65,854.70,520.65,858.06,523.28,858.06C525.90,858.06,525.90,853.94,528.52,853.94C531.15,853.94,531.15,867.37,533.77,867.37C536.39,867.37,536.39,870.57,539.02,870.57C541.64,870.57,541.64,861.87,544.27,861.87C546.89,861.87,546.89,841.88,549.51,841.88C552.14,841.88,552.14,861.87,554.76,861.87C557.38,861.87,557.38,873.62,560.01,873.62C562.63,873.62,562.63,866.45,565.25,866.45C567.88,866.45,567.88,852.11,570.50,852.11C573.12,852.11,573.12,838.68,575.75,838.68C578.37,838.68,578.37,865.84,581.00,865.84C583.62,865.84,583.62,858.36,586.24,858.36C588.87,858.36,588.87,859.74,591.49,859.74C594.11,859.74,594.11,833.79,596.74,833.79C599.36,833.79,599.36,849.82,601.98,849.82C604.61,849.82,604.61,864.31,607.23,864.31C609.86,864.31,609.86,854.70,612.48,854.70C615.10,854.70,615.10,848.44,617.73,848.44C620.35,848.44,620.35,844.02,622.97,844.02C625.60,844.02,625.60,828.76,628.22,828.76C630.84,828.76,630.84,809.68,633.47,809.68C636.09,809.68,636.09,820.67,638.71,820.67C641.34,820.67,641.34,850.27,643.96,850.27C646.59,850.27,646.59,861.11,649.21,861.11C651.83,861.11,651.83,840.51,654.46,840.51C657.08,840.51,657.08,852.11,659.70,852.11C662.33,852.11,662.33,817.16,664.95,817.16C667.57,817.16,667.57,844.48,670.20,844.48C672.82,844.48,672.82,853.02,675.44,853.02C678.07,853.02,678.07,873.62,680.69,873.62C683.32,873.62,683.32,863.70,685.94,863.70C688.56,863.70,688.56,856.99,691.19,856.99C693.81,856.99,693.81,869.04,696.43,869.04C699.06,869.04,699.06,861.11,701.68,861.11C704.30,861.11,704.30,827.84,706.93,827.84C709.55,827.84,709.55,812.74,712.18,812.74C714.80,812.74,714.80,809.68,717.42,809.68C720.05,809.68,720.05,841.88,722.67,841.88C725.29,841.88,725.29,836.85,727.92,836.85C730.54,836.85,730.54,806.94,733.16,806.94C735.79,806.94,735.79,812.74,738.41,812.74C741.03,812.74,741.03,788.47,743.66,788.47C746.28,788.47,746.28,809.68,748.91,809.68C751.53,809.68,751.53,843.10,754.15,843.10C756.78,843.10,756.78,853.94,759.40,853.94" fill="none" stroke="#4a98c3" stroke-width="2.0" stroke-linejoin="round" stroke-linecap="round"/></svg>
<span class="t" style="left:254.00px;top:723px;font-size:10.30px;line-height:11px;height:11px;color:#696969;letter-spacing:-0.328px;">100</span>
<span class="t" style="left:254.00px;top:799px;font-size:10.30px;line-height:11px;height:11px;color:#696969;letter-spacing:0.272px;">50</span>
<span class="t" style="left:254.00px;top:875px;font-size:10.30px;line-height:11px;height:11px;color:#696969;letter-spacing:-0.028px;">0</span>
<span class="t" style="left:277.20px;top:895px;font-size:10.30px;line-height:11px;height:11px;color:#696969;letter-spacing:-0.374px;">Sep 17</span>
<span class="t" style="left:328.67px;top:895px;font-size:10.30px;line-height:11px;height:11px;color:#696969;letter-spacing:-0.041px;">Sep 27</span>
<span class="t" style="left:385.09px;top:895px;font-size:10.30px;line-height:11px;height:11px;color:#696969;letter-spacing:-0.023px;">Oct 7</span>
<span class="t" style="left:435.51px;top:895px;font-size:10.30px;line-height:11px;height:11px;color:#696969;letter-spacing:-0.290px;">Oct 17</span>
<span class="t" style="left:486.98px;top:895px;font-size:10.30px;line-height:11px;height:11px;color:#696969;letter-spacing:0.043px;">Oct 27</span>
<span class="t" style="left:541.15px;top:895px;font-size:10.30px;line-height:11px;height:11px;color:#696969;letter-spacing:0.059px;">Nov 6</span>
<span class="t" style="left:591.52px;top:895px;font-size:10.30px;line-height:11px;height:11px;color:#696969;letter-spacing:-0.206px;">Nov 16</span>
<span class="t" style="left:643.09px;top:895px;font-size:10.30px;line-height:11px;height:11px;color:#696969;letter-spacing:0.094px;">Nov 26</span>
<span class="t" style="left:698.66px;top:895px;font-size:10.30px;line-height:11px;height:11px;color:#696969;letter-spacing:0.019px;">Dec 6</span>
<svg class="a" style="left:381.0px;top:931.3px" width="160" height="6" viewBox="0 0 160 6"><line x1="0.5" y1="2.7" x2="11.2" y2="2.7" stroke="#4a98c3" stroke-width="1.6" stroke-linecap="round"/><circle cx="132.40" cy="2.8" r="0.85" fill="#a4c2d2"/><circle cx="136.80" cy="2.8" r="0.85" fill="#a4c2d2"/><circle cx="141.20" cy="2.8" r="0.85" fill="#a4c2d2"/></svg>
<span class="t" style="left:399.10px;top:929px;font-size:10.30px;line-height:11px;height:11px;color:#696969;letter-spacing:-0.166px;">Sep 17–Dec 15, 2024</span>
<span class="t" style="left:530.60px;top:929px;font-size:10.30px;line-height:11px;height:11px;color:#696969;letter-spacing:-0.128px;">Jun 19–Sep 16, 2024</span>
<span class="t" style="left:807.00px;top:665px;font-size:11.70px;line-height:13px;height:13px;color:#303030;-webkit-text-stroke:0.60px #303030;letter-spacing:0.462px;">Conversion rate over time</span>
<div class="ul" style="left:807.0px;top:678px;width:145.5px"></div>
<span class="t" style="left:807.00px;top:690px;font-size:18.00px;line-height:20px;height:20px;color:#303030;font-weight:700;letter-spacing:0.692px;">0.36%</span>
<svg class="a" style="left:870.0px;top:698.0px" width="10.5" height="4" viewBox="0 0 10.5 4"><line x1="0.7" y1="2" x2="9.8" y2="2" stroke="#929292" stroke-width="1.25" stroke-linecap="round"/></svg>
<svg class="a" style="left:0;top:0" width="1919" height="948" viewBox="0 0 1919 948"><defs><linearGradient id="gG" x1="0" y1="0" x2="0" y2="1"><stop offset="0" stop-color="#4aa8da" stop-opacity="0.04"/><stop offset="1" stop-color="#4aa8da" stop-opacity="0"/></linearGradient></defs><line x1="854.8" x2="1313.7" y1="728.5" y2="728.5" stroke="#f1f1f1" stroke-width="1"/><line x1="854.8" x2="1313.7" y1="779.5" y2="779.5" stroke="#f1f1f1" stroke-width="1"/><line x1="854.8" x2="1313.7" y1="830.5" y2="830.5" stroke="#f1f1f1" stroke-width="1"/><path d="M854.80,880.70H859.96H865.11H870.27H875.42H880.58H885.74H890.89H896.05H901.21H906.36H911.52H916.67H921.83H926.99H932.14H937.30H942.46H947.61H952.77H957.92H963.08H968.24H973.39H978.55H983.70H988.86H994.02H999.17C1001.75,880.70,1001.75,819.23,1004.33,819.23C1006.91,819.23,1006.91,880.70,1009.49,880.70H1014.64H1019.80H1024.95H1030.11H1035.27H1040.42H1045.58H1050.73H1055.89H1061.05H1066.20H1071.36H1076.52H1081.67H1086.83H1091.98H1097.14H1102.30H1107.45H1112.61H1117.77H1122.92H1128.08H1133.23H1138.39H1143.55H1148.70H1153.86H1159.01H1164.17H1169.33H1174.48H1179.64H1184.80H1189.95C1192.53,880.70,1192.53,817.20,1195.11,817.20C1197.69,817.20,1197.69,880.70,1200.26,880.70H1205.42H1210.58H1215.73H1220.89H1226.04C1228.62,880.70,1228.62,747.60,1231.20,747.60C1233.78,747.60,1233.78,880.70,1236.36,880.70H1241.51H1246.67H1251.83H1256.98C1259.56,880.70,1259.56,808.56,1262.14,808.56C1264.72,808.56,1264.72,880.70,1267.29,880.70C1269.87,880.70,1269.87,826.85,1272.45,826.85C1275.03,826.85,1275.03,783.16,1277.61,783.16C1280.18,783.16,1280.18,795.10,1282.76,795.10C1285.34,795.10,1285.34,880.70,1287.92,880.70H1293.08H1298.23H1303.39H1308.54H1313.70L1313.70,880.70L854.80,880.70Z" fill="url(#gG)"/><path d="M854.80,880.70H859.96H865.11H870.27H875.42H880.58H885.74H890.89H896.05H901.21H906.36H911.52H916.67H921.83H926.99H932.14H937.30H942.46H947.61H952.77H957.92H963.08H968.24H973.39H978.55H983.70H988.86H994.02H999.17H1004.33H1009.49H1014.64H1019.80H1024.95H1030.11H1035.27H1040.42H1045.58H1050.73H1055.89H1061.05H1066.20H1071.36H1076.52H1081.67H1086.83H1091.98H1097.14H1102.30H1107.45H1112.61H1117.77H1122.92H1128.08H1133.23H1138.39H1143.55H1148.70H1153.86H1159.01H1164.17H1169.33H1174.48H1179.64H1184.80H1189.95H1195.11H1200.26H1205.42H1210.58H1215.73H1220.89H1226.04H1231.20H1236.36H1241.51H1246.67H1251.83H1256.98H1262.14H1267.29H1272.45H1277.61H1282.76H1287.92H1293.08H1298.23H1303.39H1308.54H1313.70" fill="none" stroke="#9fc0d5" stroke-width="1.7" stroke-dasharray="0.1 3.5" stroke-linecap="round"/><path d="M854.80,880.70H859.96H865.11H870.27H875.42H880.58H885.74H890.89H896.05H901.21H906.36H911.52H916.67H921.83H926.99H932.14H937.30H942.46H947.61H952.77H957.92H963.08H968.24H973.39H978.55H983.70H988.86H994.02H999.17C1001.75,880.70,1001.75,819.23,1004.33,819.23C1006.91,819.23,1006.91,880.70,1009.49,880.70H1014.64H1019.80H1024.95H1030.11H1035.27H1040.42H1045.58H1050.73H1055.89H1061.05H1066.20H1071.36H1076.52H1081.67H1086.83H1091.98H1097.14H1102.30H1107.45H1112.61H1117.77H1122.92H1128.08H1133.23H1138.39H1143.55H1148.70H1153.86H1159.01H1164.17H1169.33H1174.48H1179.64H1184.80H1189.95C1192.53,880.70,1192.53,817.20,1195.11,817.20C1197.69,817.20,1197.69,880.70,1200.26,880.70H1205.42H1210.58H1215.73H1220.89H1226.04C1228.62,880.70,1228.62,747.60,1231.20,747.60C1233.78,747.60,1233.78,880.70,1236.36,880.70H1241.51H1246.67H1251.83H1256.98C1259.56,880.70,1259.56,808.56,1262.14,808.56C1264.72,808.56,1264.72,880.70,1267.29,880.70C1269.87,880.70,1269.87,826.85,1272.45,826.85C1275.03,826.85,1275.03,783.16,1277.61,783.16C1280.18,783.16,1280.18,795.10,1282.76,795.10C1285.34,795.10,1285.34,880.70,1287.92,880.70H1293.08H1298.23H1303.39H1308.54H1313.70" fill="none" stroke="#4a98c3" stroke-width="1.9" stroke-linejoin="round" stroke-linecap="round"/></svg>
<span class="t" style="left:808.00px;top:723px;font-size:10.30px;line-height:11px;height:11px;color:#696969;letter-spacing:0.081px;">6.0%</span>
<span class="t" style="left:808.00px;top:774px;font-size:10.30px;line-height:11px;height:11px;color:#696969;letter-spacing:0.081px;">4.0%</span>
<span class="t" style="left:808.00px;top:824px;font-size:10.30px;line-height:11px;height:11px;color:#696969;letter-spacing:0.081px;">2.0%</span>
<span class="t" style="left:808.00px;top:875px;font-size:10.30px;line-height:11px;height:11px;color:#696969;letter-spacing:0.081px;">0.0%</span>
<span class="t" style="left:839.60px;top:895px;font-size:10.30px;line-height:11px;height:11px;color:#696969;letter-spacing:-0.374px;">Sep 17</span>
<span class="t" style="left:890.16px;top:895px;font-size:10.30px;line-height:11px;height:11px;color:#696969;letter-spacing:-0.041px;">Sep 27</span>
<span class="t" style="left:945.67px;top:895px;font-size:10.30px;line-height:11px;height:11px;color:#696969;letter-spacing:-0.023px;">Oct 7</span>
<span class="t" style="left:995.18px;top:895px;font-size:10.30px;line-height:11px;height:11px;color:#696969;letter-spacing:-0.290px;">Oct 17</span>
<span class="t" style="left:1045.74px;top:895px;font-size:10.30px;line-height:11px;height:11px;color:#696969;letter-spacing:0.043px;">Oct 27</span>
<span class="t" style="left:1099.00px;top:895px;font-size:10.30px;line-height:11px;height:11px;color:#696969;letter-spacing:0.059px;">Nov 6</span>
<span class="t" style="left:1148.46px;top:895px;font-size:10.30px;line-height:11px;height:11px;color:#696969;letter-spacing:-0.206px;">Nov 16</span>
<span class="t" style="left:1199.12px;top:895px;font-size:10.30px;line-height:11px;height:11px;color:#696969;letter-spacing:0.094px;">Nov 26</span>
<span class="t" style="left:1253.78px;top:895px;font-size:10.30px;line-height:11px;height:11px;color:#696969;letter-spacing:0.019px;">Dec 6</span>
<svg class="a" style="left:935.3px;top:931.3px" width="160" height="6" viewBox="0 0 160 6"><line x1="0.5" y1="2.7" x2="11.2" y2="2.7" stroke="#4a98c3" stroke-width="1.6" stroke-linecap="round"/><circle cx="132.10" cy="2.8" r="0.85" fill="#a4c2d2"/><circle cx="136.50" cy="2.8" r="0.85" fill="#a4c2d2"/><circle cx="140.90" cy="2.8" r="0.85" fill="#a4c2d2"/></svg>
<span class="t" style="left:953.80px;top:929px;font-size:10.30px;line-height:11px;height:11px;color:#696969;letter-spacing:-0.176px;">Sep 17–Dec 15, 2024</span>
<span class="t" style="left:1085.10px;top:929px;font-size:10.30px;line-height:11px;height:11px;color:#696969;letter-spacing:-0.128px;">Jun 19–Sep 16, 2024</span>
<svg class="a" style="left:1361px;top:667px" width="13" height="13" viewBox="0 0 13 13" fill="none" stroke="#4a96c4" stroke-width="1.45"><circle cx="6.500" cy="6.500" r="5.500"/><path d="M6.500 6v3.300" stroke-linecap="round" stroke-width="1.600"/><circle cx="6.500" cy="3.700" r=".55" fill="#4a96c4" stroke-width=".7"/></svg>
<span class="t" style="left:1382.20px;top:665px;font-size:11.70px;line-height:13px;height:13px;color:#303030;-webkit-text-stroke:0.60px #303030;letter-spacing:0.517px;">Conversion rate breakdown</span>
<div class="ul" style="left:1382.2px;top:678px;width:156.0px"></div>
<div class="row" style="top:688.0px;height:31.5px"></div>
<span class="t" style="left:1372.50px;top:698px;font-size:11.70px;line-height:13px;height:13px;color:#303030;letter-spacing:0.445px;">Sessions</span>
<span class="t" style="left:1787.03px;top:698px;font-size:11.70px;line-height:13px;height:13px;color:#303030;letter-spacing:0.498px;">1,953</span>
<svg class="a" style="left:1825.3px;top:701.9px" width="6" height="6" viewBox="0 0 6 6" fill="none" stroke="#1a9a5c" stroke-width="1.3" stroke-linecap="round" stroke-linejoin="round"><path d="M1 5l4-4M1.600.9h3.500v3.500"/></svg>
<span class="t" style="left:1834.40px;top:700px;font-size:10.40px;line-height:11px;height:11px;color:#1a9a5c;font-weight:700;letter-spacing:0.325px;">266%</span>
<div class="row" style="top:724.0px;height:31.5px"></div>
<span class="t" style="left:1372.50px;top:734px;font-size:11.70px;line-height:13px;height:13px;color:#303030;letter-spacing:0.387px;">Sessions with cart additions</span>
<span class="t" style="left:1804.68px;top:734px;font-size:11.70px;line-height:13px;height:13px;color:#303030;letter-spacing:0.553px;">39</span>
<svg class="a" style="left:1825.6px;top:737.9px" width="6" height="6" viewBox="0 0 6 6" fill="none" stroke="#1a9a5c" stroke-width="1.3" stroke-linecap="round" stroke-linejoin="round"><path d="M1 5l4-4M1.600.9h3.500v3.500"/></svg>
<span class="t" style="left:1834.70px;top:736px;font-size:10.40px;line-height:11px;height:11px;color:#1a9a5c;font-weight:700;letter-spacing:0.175px;">875%</span>
<div class="row" style="top:760.0px;height:31.5px"></div>
<span class="t" style="left:1372.50px;top:770px;font-size:11.70px;line-height:13px;height:13px;color:#303030;letter-spacing:0.388px;">Added to cart rate</span>
<span class="t" style="left:1800.45px;top:770px;font-size:11.70px;line-height:13px;height:13px;color:#303030;letter-spacing:0.719px;">2%</span>
<svg class="a" style="left:1826.6px;top:773.9px" width="6" height="6" viewBox="0 0 6 6" fill="none" stroke="#1a9a5c" stroke-width="1.3" stroke-linecap="round" stroke-linejoin="round"><path d="M1 5l4-4M1.600.9h3.500v3.500"/></svg>
<span class="t" style="left:1835.70px;top:772px;font-size:10.40px;line-height:11px;height:11px;color:#1a9a5c;font-weight:700;letter-spacing:-0.325px;">167%</span>
<div class="row" style="top:796.0px;height:31.5px"></div>
<span class="t" style="left:1372.50px;top:806px;font-size:11.70px;line-height:13px;height:13px;color:#303030;letter-spacing:0.415px;">Sessions that reached checkout</span>
<span class="t" style="left:1802.38px;top:806px;font-size:11.70px;line-height:13px;height:13px;color:#303030;letter-spacing:0.553px;">34</span>
<svg class="a" style="left:1825.0px;top:809.9px" width="6" height="6" viewBox="0 0 6 6" fill="none" stroke="#1a9a5c" stroke-width="1.3" stroke-linecap="round" stroke-linejoin="round"><path d="M1 5l4-4M1.600.9h3.500v3.500"/></svg>
<span class="t" style="left:1834.05px;top:808px;font-size:10.40px;line-height:11px;height:11px;color:#1a9a5c;font-weight:700;letter-spacing:-0.523px;">1.6K%</span>
<div class="row" style="top:832.0px;height:31.5px"></div>
<span class="t" style="left:1372.50px;top:842px;font-size:11.70px;line-height:13px;height:13px;color:#303030;letter-spacing:0.430px;">Reached checkout rate</span>
<span class="t" style="left:1775.75px;top:842px;font-size:11.70px;line-height:13px;height:13px;color:#303030;letter-spacing:0.562px;">69.23%</span>
<svg class="a" style="left:1828.5px;top:845.9px" width="6" height="6" viewBox="0 0 6 6" fill="none" stroke="#1a9a5c" stroke-width="1.3" stroke-linecap="round" stroke-linejoin="round"><path d="M1 5l4-4M1.600.9h3.500v3.500"/></svg>
<span class="t" style="left:1837.65px;top:844px;font-size:10.40px;line-height:11px;height:11px;color:#1a9a5c;font-weight:700;letter-spacing:0.195px;">38%</span>
<div class="row" style="top:868.0px;height:31.5px"></div>
<span class="t" style="left:1372.50px;top:878px;font-size:11.70px;line-height:13px;height:13px;color:#303030;letter-spacing:0.416px;">Sessions that completed checkout</span>
<span class="t" style="left:1811.74px;top:878px;font-size:11.70px;line-height:13px;height:13px;color:#303030;letter-spacing:0.553px;">7</span>
<svg class="a" style="left:1838.8px;top:882.5px" width="10.5" height="4" viewBox="0 0 10.5 4"><line x1="0.7" y1="2" x2="9.8" y2="2" stroke="#929292" stroke-width="1.25" stroke-linecap="round"/></svg>
<div class="row" style="top:904.0px;height:31.5px"></div>
<span class="t" style="left:1372.50px;top:914px;font-size:11.70px;line-height:13px;height:13px;color:#303030;letter-spacing:0.413px;">Conversion rate</span>
<span class="t" style="left:1782.81px;top:914px;font-size:11.70px;line-height:13px;height:13px;color:#303030;letter-spacing:0.564px;">0.36%</span>
<svg class="a" style="left:1838.8px;top:918.5px" width="10.5" height="4" viewBox="0 0 10.5 4"><line x1="0.7" y1="2" x2="9.8" y2="2" stroke="#929292" stroke-width="1.25" stroke-linecap="round"/></svg>
<div class="a" style="left:1554px;top:844px;width:208px;height:88px;background:#f9f9f9;border-radius:7px;box-shadow:0 3px 12px rgba(0,0,0,.17),0 0 0 1px rgba(0,0,0,.045)"></div>
<div class="a" style="left:1679.8px;top:849.5px;width:36.4px;height:38px;background:#fdfdfd;border-radius:3.5px;box-shadow:0 1px 1px rgba(0,0,0,.05)"></div>
<svg class="a" style="left:1554px;top:844px" width="208" height="88" viewBox="0 0 208 88">
<defs><linearGradient id="vg" x1="0" y1="0" x2="1" y2="0"><stop offset="0" stop-color="#3f414d"/><stop offset=".55" stop-color="#6d6f7b"/><stop offset="1" stop-color="#e9e9ee"/></linearGradient>
<linearGradient id="fg" x1="0" y1="1" x2="1" y2="0"><stop offset="0" stop-color="#8a4cc4"/><stop offset="1" stop-color="#a874de"/></linearGradient></defs>
<path d="M24.100 15.900c5.600 0 8.100 2.500 8.100 8 0 5.700-2.500 8.300-8.100 8.300-5.700 0-8.200-2.600-8.200-8.200 0-5.600 2.500-8.100 8.200-8.100z" fill="#59a71f"/><path d="M21.100 24.400l2.200 2.100 3.900-4.400" fill="none" stroke="#fff" stroke-width="1.600" stroke-linecap="round" stroke-linejoin="round"/>
<path d="M55.800 19.200l10.300.2-4.300 11.200z" fill="url(#vg)"/><circle cx="67.700" cy="20.200" r="4.400" fill="#d3354e"/><path d="M66.400 18.900l2.600 2.600m0-2.600l-2.600 2.600" stroke="#fff" stroke-width="1" stroke-linecap="round"/>
<rect x="99.90" y="17.00" width="3.20" height="15.20" rx="1.60" fill="#6e6e6e"/><rect x="103.90" y="17.00" width="3.20" height="15.20" rx="1.60" fill="#6e6e6e"/><rect x="95.90" y="21.00" width="15.20" height="3.20" rx="1.60" fill="#6e6e6e"/><rect x="95.90" y="25.00" width="15.20" height="3.20" rx="1.60" fill="#6e6e6e"/><rect x="100.70" y="17.80" width="1.60" height="13.60" rx="0.80" fill="#fbfbfb"/><rect x="104.70" y="17.80" width="1.60" height="13.60" rx="0.80" fill="#fbfbfb"/><rect x="96.70" y="21.80" width="13.60" height="1.60" rx="0.80" fill="#fbfbfb"/><rect x="96.70" y="25.80" width="13.60" height="1.60" rx="0.80" fill="#fbfbfb"/>
<path d="M136.800 31.300c1.300-5.600 6.400-11.800 14.400-15.200.4 5.500-4.600 11.100-12.300 13.200z" fill="url(#fg)"/><path d="M138.500 29.200c3.200-4.300 6.800-7.600 11.400-10.600" stroke="#d3b5ef" stroke-width=".9" fill="none" stroke-linecap="round"/>
<path d="M178 21.300c0-3.100 2.500-5.100 6-5.100s6 2 6 5.100c0 .5-.3.800-.8.900l-1.100.3v8.100c0 .8-.6 1.400-1.400 1.400h-5.400c-.8 0-1.400-.6-1.400-1.400v-8.100l-1.100-.3c-.5-.1-.8-.4-.8-.9z" fill="#232323"/><path d="M180.300 20.600c.8-1.300 2.100-1.900 3.700-1.900s2.900.6 3.700 1.900" stroke="#777" stroke-width=".9" fill="none"/><path d="M182 24.200v5.600m4-5.600v5.600m-4-2.800h4" stroke="#d9d9d9" stroke-width="1.300" fill="none"/>
<path d="M17.100 58.700c2.800-.2 5-1 7.100-2.500 2.100 1.500 4.300 2.300 7.100 2.500v4.300c0 4.200-2.700 7-7.100 8.700-4.400-1.700-7.100-4.500-7.100-8.700z" fill="#1b78c8"/><path d="M17.100 58.700c2.800-.2 5-1 7.100-2.500v7.300h-7.100z" fill="#2aa9ea"/><path d="M24.200 56.200c2.100 1.500 4.300 2.300 7.100 2.500v4.800h-7.100z" fill="#1f93dd"/>
<path d="M27.600 60.800l5.200 10.900h-10.400z" fill="#f9f9f9"/><path d="M27.600 62.600l4.200 8.700h-8.400z" fill="#f7c42a"/><path d="M27.600 65.400v3.200m0 1.100v.7" stroke="#2a2200" stroke-width="1.100"/>
</svg>
<div class="a" style="left:1911px;top:122px;width:8px;height:282px;background:#b3b3b3"></div>
<svg class="a" style="left:1911px;top:53px" width="6" height="3.5" viewBox="0 0 8 5"><path d="M0 5l4-4.500 4 4.500z" fill="#a3a3a3"/></svg>
<svg class="a" style="left:1911px;top:936.5px" width="6" height="3.5" viewBox="0 0 8 5"><path d="M0 0l4 4.500 4-4.500z" fill="#a3a3a3"/></svg>
<div class="a" style="left:0;top:944.600px;width:1919px;height:4px;background:#d3dbe8;border-top:1px solid #a9b9cc"></div>
</div></body></html>
